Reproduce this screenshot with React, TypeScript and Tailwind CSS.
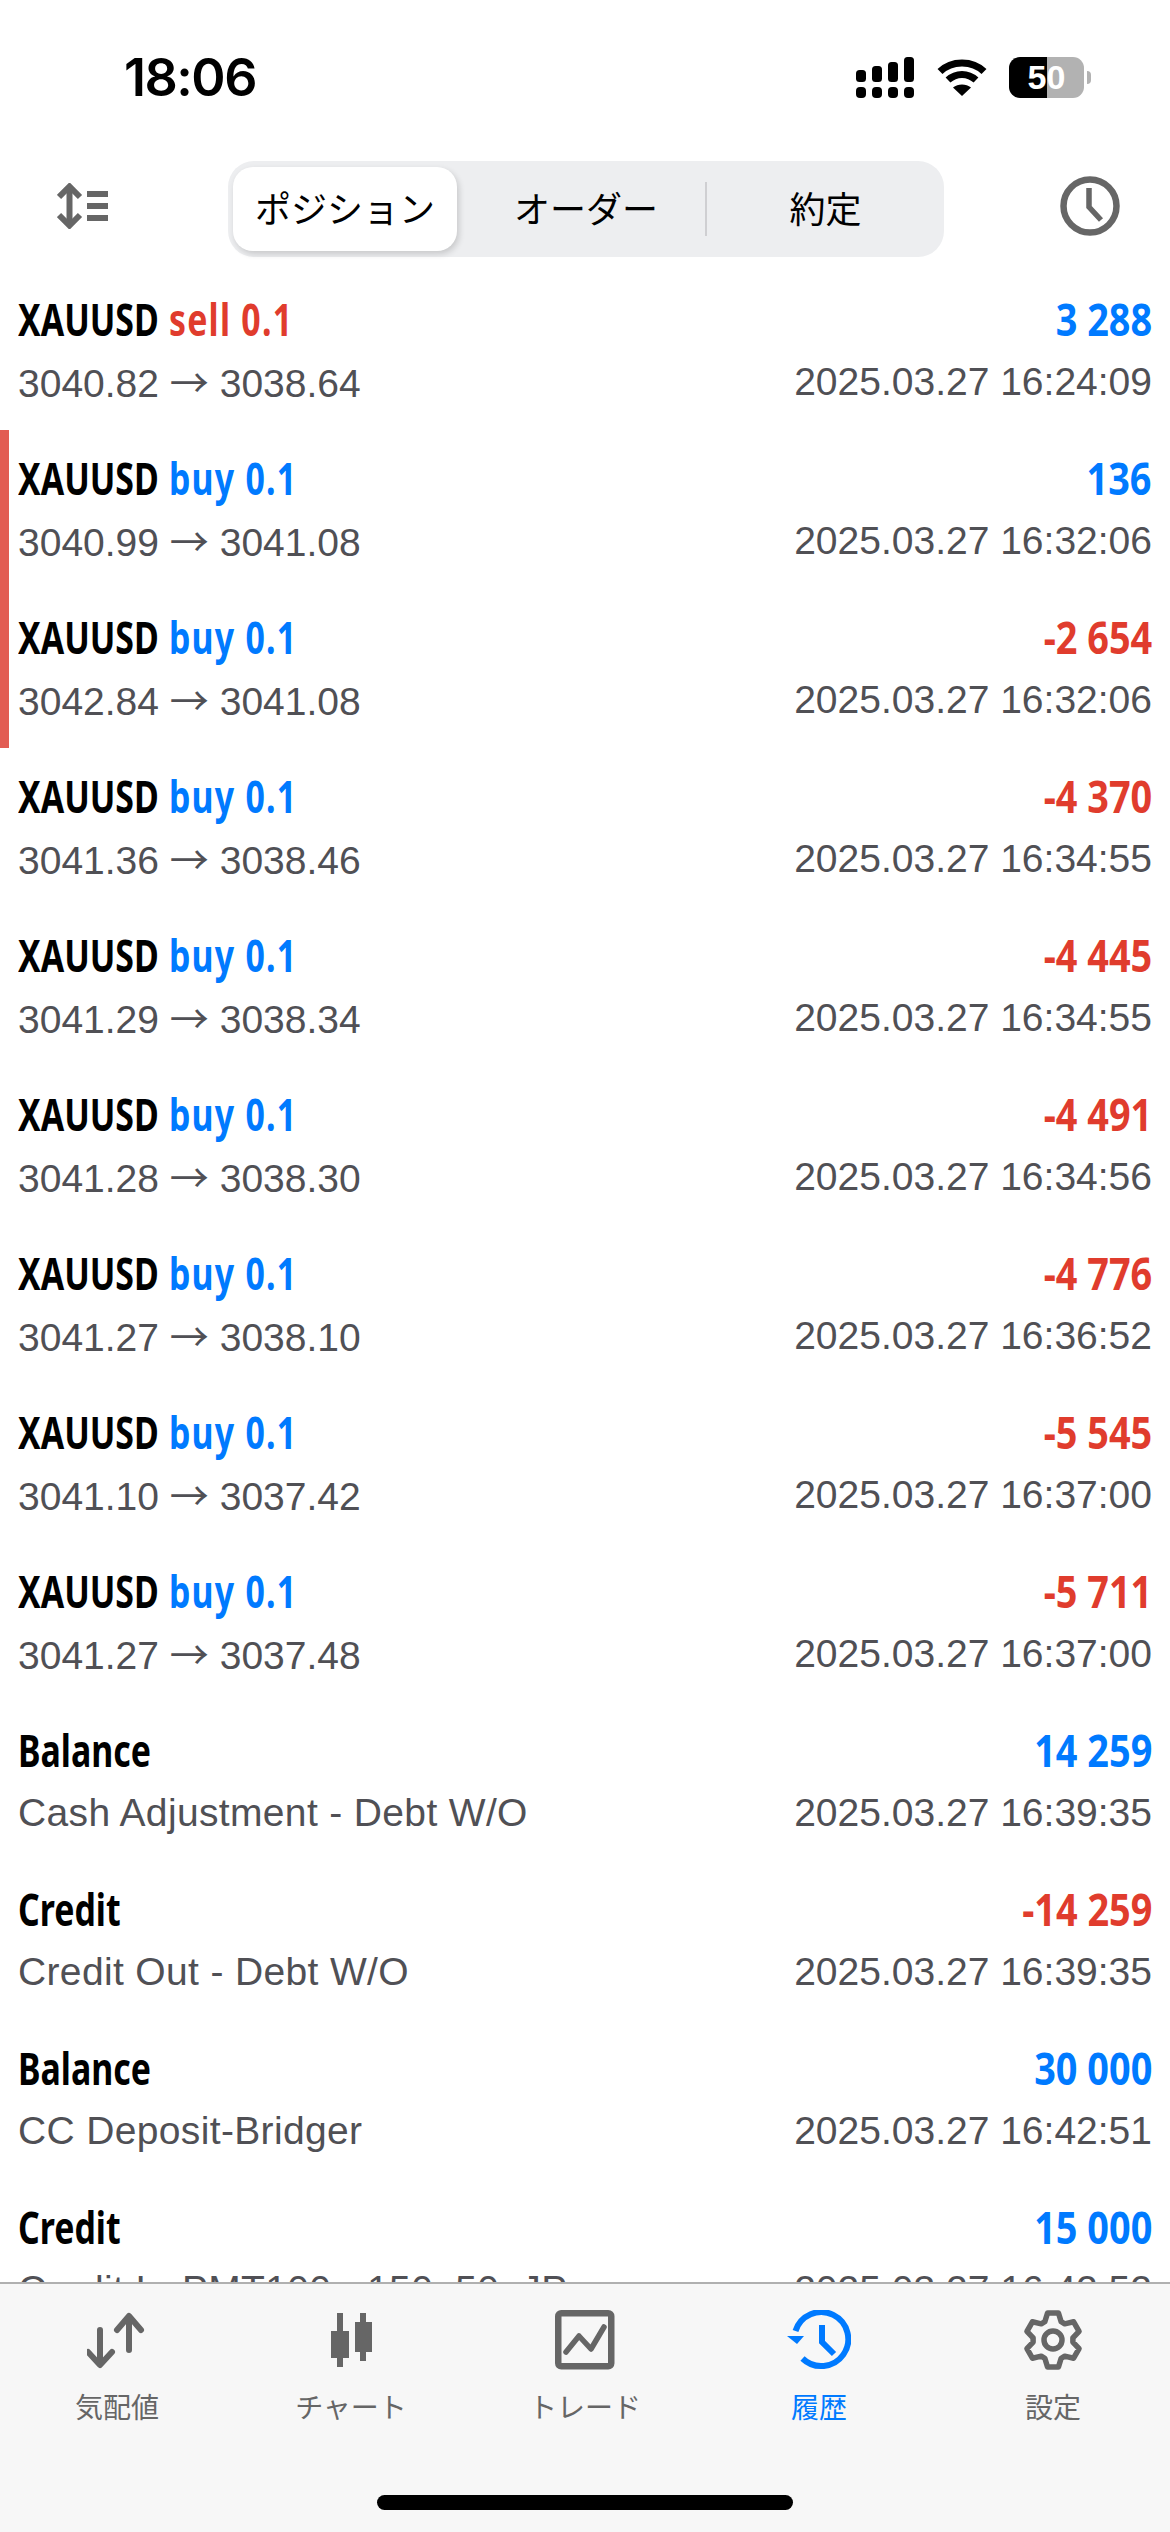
import { FC } from "react"

// Types
type Row = {
  title: string
  side?: "buy" | "sell"
  from?: string
  to?: string
  sub?: string
  value: string
  time: string
  marked?: boolean
}

const trade = (side: "buy" | "sell", from: string, to: string, value: string, time: string, marked = false): Row => ({
  title: "XAUUSD",
  side,
  from,
  to,
  value,
  time: `2025.03.27 ${time}`,
  marked,
})

const rows: Row[] = [
  trade("sell", "3040.82", "3038.64", "3 288", "16:24:09"),
  trade("buy", "3040.99", "3041.08", "136", "16:32:06", true),
  trade("buy", "3042.84", "3041.08", "-2 654", "16:32:06", true),
  trade("buy", "3041.36", "3038.46", "-4 370", "16:34:55"),
  trade("buy", "3041.29", "3038.34", "-4 445", "16:34:55"),
  trade("buy", "3041.28", "3038.30", "-4 491", "16:34:56"),
  trade("buy", "3041.27", "3038.10", "-4 776", "16:36:52"),
  trade("buy", "3041.10", "3037.42", "-5 545", "16:37:00"),
  trade("buy", "3041.27", "3037.48", "-5 711", "16:37:00"),
  { title: "Balance", sub: "Cash Adjustment - Debt W/O", value: "14 259", time: "2025.03.27 16:39:35" },
  { title: "Credit", sub: "Credit Out - Debt W/O", value: "-14 259", time: "2025.03.27 16:39:35" },
  { title: "Balance", sub: "CC Deposit-Bridger", value: "30 000", time: "2025.03.27 16:42:51" },
  { title: "Credit", sub: "Credit In-PMT100 - 150_50_JP", value: "15 000", time: "2025.03.27 16:42:52" },
]

const gearPath = () => {
  const pts: string[] = []
  for (let i = 0; i < 6; i++) {
    const a = ((i * 60 - 90) * Math.PI) / 180
    const p = (r: number, off: number) => {
      const x = 30 + r * Math.cos(a + off)
      const y = 30 + r * Math.sin(a + off)
      return `${x.toFixed(2)} ${y.toFixed(2)}`
    }
    pts.push(p(20, -0.42), p(27.5, -0.2), p(27.5, 0.2), p(20, 0.42))
  }
  return `M${pts.join("L")}Z`
}

const SignalIcon = () => (
  <svg width="58" height="41" viewBox="0 0 58 41" fill="#000">
    <rect x="0" y="13" width="10" height="12" rx="3.5" />
    <rect x="16" y="9" width="10" height="16" rx="3.5" />
    <rect x="32" y="5" width="10" height="20" rx="3.5" />
    <rect x="48" y="0" width="10" height="25" rx="3.5" />
    <rect x="0" y="30" width="10" height="11" rx="4" />
    <rect x="16" y="30" width="10" height="11" rx="4" />
    <rect x="32" y="30" width="10" height="11" rx="4" />
    <rect x="48" y="30" width="10" height="11" rx="4" />
  </svg>
)

const WifiIcon = () => (
  <svg width="50" height="39" viewBox="0 0 50 39" fill="none" stroke="#000">
    <path d="M3 14.500C14.500 3 35.500 3 47 14.500" strokeWidth="7" />
    <path d="M11 23C19 15.500 31 15.500 39 23" strokeWidth="7" />
    <path d="M25 39L16 30.500C21 26.500 29 26.500 34 30.500Z" fill="#000" stroke="none" />
  </svg>
)

const SortIcon = () => (
  <svg width="51" height="46" viewBox="0 0 51 46" fill="none" stroke="#666">
    <path d="M12.500 3V43" strokeWidth="6" />
    <path d="M2 14L12.500 3.500L23 14M2 32L12.500 42.500L23 32" strokeWidth="6" />
    <path d="M30 11H51M30 23H51M30 35H51" strokeWidth="6" />
  </svg>
)

const ClockIcon = () => (
  <svg width="60" height="60" viewBox="0 0 60 60" fill="none" stroke="#666">
    <circle cx="30" cy="30" r="26.500" strokeWidth="6.500" />
    <path d="M29 12V31L41 44" strokeWidth="5.500" />
  </svg>
)

const QuotesIcon = () => (
  <svg width="60" height="60" viewBox="0 0 60 60" fill="none" stroke="#666" strokeWidth="6" strokeLinecap="round" strokeLinejoin="round">
    <path d="M42 7V40M30 20L42 6L54 20" />
    <path d="M13 20V54M1 42L13 55L25 42" />
  </svg>
)

const ChartIcon = () => (
  <svg width="60" height="60" viewBox="0 0 60 60" fill="#666">
    <rect x="16" y="3" width="6" height="54" />
    <rect x="10" y="21" width="18" height="27" />
    <rect x="39" y="3" width="6" height="48" />
    <path d="M34 12H51V42H34ZM39 17V36H45V17Z" fillRule="evenodd" />
  </svg>
)

const TradeIcon = () => (
  <svg width="60" height="60" viewBox="0 0 60 60" fill="none" stroke="#666">
    <rect x="3.250" y="3.250" width="53" height="53" rx="3" strokeWidth="6.500" />
    <path d="M11 42L24 26L36 39L49 17" strokeWidth="5.500" strokeLinecap="round" strokeLinejoin="round" />
  </svg>
)

const HistoryIcon = () => (
  <svg width="64" height="60" viewBox="0 0 64 60" fill="none" stroke="#007aff">
    <path d="M8.500 21A27 27 0 1 1 15.500 48.500" strokeWidth="6" />
    <path d="M0 26H17L10 34Z" fill="#007aff" stroke="none" />
    <path d="M35 15V32L47 44" strokeWidth="6" />
  </svg>
)

const GearIcon = () => (
  <svg width="60" height="60" viewBox="0 0 60 60" fill="none" stroke="#666" strokeWidth="5.500" strokeLinejoin="round">
    <path d={gearPath()} />
    <circle cx="30" cy="30" r="9" />
  </svg>
)

const tabs = [
  { label: "気配値", icon: <QuotesIcon /> },
  { label: "チャート", icon: <ChartIcon /> },
  { label: "トレード", icon: <TradeIcon /> },
  { label: "履歴", icon: <HistoryIcon />, active: true },
  { label: "設定", icon: <GearIcon /> },
]

const App: FC = () => {
  return (
    <div className="h-[2532px] w-[1170px] bg-white flex flex-col overflow-hidden font-['Liberation_Sans','Noto_Sans_CJK_JP',sans-serif]">

      {/* Status bar */}
      <div className="h-[161px] shrink-0 flex items-start justify-between pt-[57px] pl-[124px] pr-[79px]">
        <span className="text-[52px] leading-[41px] font-semibold text-black font-['Inter',sans-serif] tracking-[-1.5px]">18:06</span>
        <div className="flex items-start">
          <SignalIcon />
          <div className="ml-[23px]"><WifiIcon /></div>
          <div className="ml-[22px] w-[75px] h-[41px] rounded-[11px] bg-[linear-gradient(90deg,#000_51%,#b2b2b2_51%)] text-white text-[34px] font-bold flex items-center justify-center">50</div>
          <div className="ml-[3px] mt-[14px] w-[4px] h-[13px] rounded-r-full bg-[#b2b2b2]" />
        </div>
      </div>

      {/* Header */}
      <div className="h-[110px] shrink-0 flex items-start">
        <div className="w-[228px] pl-[57px] pt-[22px]"><SortIcon /></div>
        <div className="w-[716px] h-[96px] rounded-[26px] bg-[#edeef0] flex items-center pl-[5px] text-[36px] text-black font-['Noto_Sans_CJK_JP',sans-serif]">
          <div className="w-[224px] h-[84px] rounded-[20px] bg-white shadow-[2px_3px_6px_rgba(0,0,0,0.16)] flex items-center justify-center pb-[4px]">ポジション</div>
          <div className="w-[248px] flex justify-center pl-[10px] pb-[4px]">オーダー</div>
          <div className="w-[2px] h-[54px] bg-[#cfcfd2]" />
          <div className="flex-1 flex justify-center pb-[4px]">約定</div>
        </div>
        <div className="ml-[116px] pt-[15px]"><ClockIcon /></div>
      </div>

      {/* List */}
      <div className="flex-1 min-h-0 overflow-hidden">
        {rows.map((row, i) => (
          <div
            key={i}
            className={`h-[159px] pt-[24px] pr-[18px] ${row.marked ? "border-l-[9px] border-[#e25c53] pl-[9px]" : "pl-[18px]"}`}
          >
            <div className="flex justify-between items-center h-[48px] text-[44px] font-bold font-['Noto_Sans',sans-serif]">
              <span className="text-black inline-block origin-left scale-x-[0.77] whitespace-nowrap">
                {row.title}
                {row.side && (
                  <span className={`tracking-[1.6px] ${row.side === "buy" ? "text-[#007aff]" : "text-[#e03c2d]"}`}> {row.side} 0.1</span>
                )}
              </span>
              <span className={`inline-block origin-right scale-x-[0.86] whitespace-nowrap ${row.value.startsWith("-") ? "text-[#e03c2d]" : "text-[#007aff]"}`}>{row.value}</span>
            </div>
            <div className="flex justify-between items-center h-[50px] mt-[14px] text-[39px] text-[#505055]">
              {row.sub ? (
                <span className="tracking-[0.35px]">{row.sub}</span>
              ) : (
                <span>
                  {row.from} <span className="font-['Noto_Sans_CJK_JP',sans-serif]">→</span> {row.to}
                </span>
              )}
              <span>{row.time}</span>
            </div>
          </div>
        ))}
      </div>

      {/* Tab bar */}
      <div className="h-[250px] shrink-0 bg-[#f7f7f7] border-t-2 border-[#b0b0b0] flex flex-col">
        <div className="flex pt-[26px]">
          {tabs.map((tab) => (
            <div key={tab.label} className="w-[234px] flex flex-col items-center">
              <div className="h-[60px] flex items-center justify-center">{tab.icon}</div>
              <span className={`mt-[16px] text-[28px] leading-[40px] font-['Noto_Sans_CJK_JP',sans-serif] ${tab.active ? "text-[#007aff]" : "text-[#666]"}`}>{tab.label}</span>
            </div>
          ))}
        </div>
        <div className="mt-[69px] mx-auto w-[416px] h-[15px] rounded-full bg-black" />
      </div>

    </div>
  )
}

export default App
